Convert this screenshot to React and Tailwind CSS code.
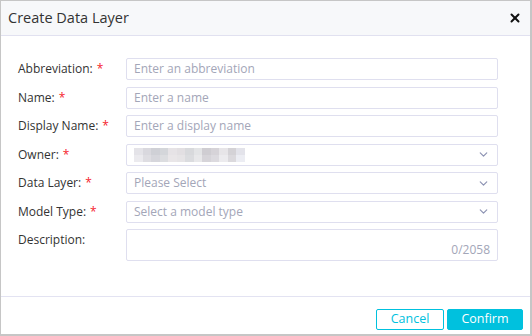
import { ChevronDown, X } from 'lucide-react';

const fields = [
  { label: 'Abbreviation:', required: true, type: 'input', placeholder: 'Enter an abbreviation' },
  { label: 'Name:', required: true, type: 'input', placeholder: 'Enter a name' },
  { label: 'Display Name:', required: true, type: 'input', placeholder: 'Enter a display name' },
  { label: 'Owner:', required: true, type: 'owner' },
  { label: 'Data Layer:', required: true, type: 'select', placeholder: 'Please Select' },
  { label: 'Model Type:', required: true, type: 'select', placeholder: 'Select a model type' },
];

// pixelated blur that hides the owner name
const blurTop = ['#e4e3e8', '#d9d8de', '#cfd0d6', '#d4d6da', '#e6e3e6', '#e2dfe2', '#d8d9dc', '#e3e4e6', '#cfcdd2', '#d6d3d8', '#e7e5e8', '#d4d2d6', '#e3e3ea'];
const blurBottom = ['#ebeaee', '#dedde2', '#d6d6dc', '#dcdde0', '#e9e6e8', '#e6e4e6', '#dbdcdf', '#e8e8ea', '#d6d4d9', '#dcdadf', '#ecebee', '#dbd9dd', '#ecedf3'];

function Field({ field }) {
  return (
    <div className="flex items-center h-[22px]">
      <div className="w-[125px] shrink-0 pl-[17px] text-[12px] text-[#333] whitespace-nowrap">
        {field.label}
        {field.required && <span className="text-[#f5222d] ml-[4px]">*</span>}
      </div>
      <div className="flex items-center justify-between w-[372px] h-full border border-[#dfdfef] rounded-[2px] px-[7px] text-[12px]">
        {field.type === 'owner' ? (
          <div className="flex flex-col">
            <div className="flex">
              {blurTop.map((c, i) => (
                <div key={i} className="w-[8.5px] h-[7px]" style={{ backgroundColor: c }} />
              ))}
            </div>
            <div className="flex">
              {blurBottom.map((c, i) => (
                <div key={i} className="w-[8.5px] h-[7px]" style={{ backgroundColor: c }} />
              ))}
            </div>
          </div>
        ) : (
          <span className="text-[#a3a6b8]">{field.placeholder}</span>
        )}
        {field.type !== 'input' && <ChevronDown className="w-[13px] h-[13px] text-[#8d93b3]" strokeWidth={2.2} />}
      </div>
    </div>
  );
}

export default function App() {
  return (
    <div
      className="w-[532px] h-[336px] bg-white border-l border-t border-r-2 border-b-2 border-[#c6c6c6] flex flex-col"
      style={{ fontFamily: '"Open Sans", "Noto Sans", sans-serif' }}
    >
      {/* Header */}
      <div className="h-[35px] shrink-0 bg-[#f7f8fa] border-b border-[#e1e1f0] flex items-center justify-between pl-[7px] pr-[8px]">
        <span className="text-[14.5px] text-[#333]">Create Data Layer</span>
        <X className="w-[14px] h-[14px] text-[#111]" strokeWidth={3.4} />
      </div>

      {/* Body */}
      <div className="flex-1 flex flex-col gap-[6.5px] pt-[22px]">
        {fields.map((f) => (
          <Field key={f.label} field={f} />
        ))}
        <div className="flex items-start h-[32px]">
          <div className="w-[125px] shrink-0 pl-[17px] pt-[2px] text-[12px] text-[#333]">Description:</div>
          <div className="relative w-[372px] h-full border border-[#dfdfef] rounded-[2px]">
            <span className="absolute right-[7px] bottom-[1px] text-[12px] text-[#a3a6b8]">0/2058</span>
          </div>
        </div>
      </div>

      {/* Footer */}
      <div className="h-[38px] shrink-0 border-t border-[#e3e3f2] flex items-start justify-end gap-[3px] pt-[12px] pr-[7px]">
        <button className="w-[68px] h-[21px] border border-[#00c1de] rounded-[2px] text-[12.5px] text-[#00c1de] bg-white leading-none">
          Cancel
        </button>
        <button className="w-[76px] h-[21px] border border-[#00c1de] rounded-[2px] text-[12.5px] text-white bg-[#00c1de] leading-none">
          Confirm
        </button>
      </div>
    </div>
  );
}
